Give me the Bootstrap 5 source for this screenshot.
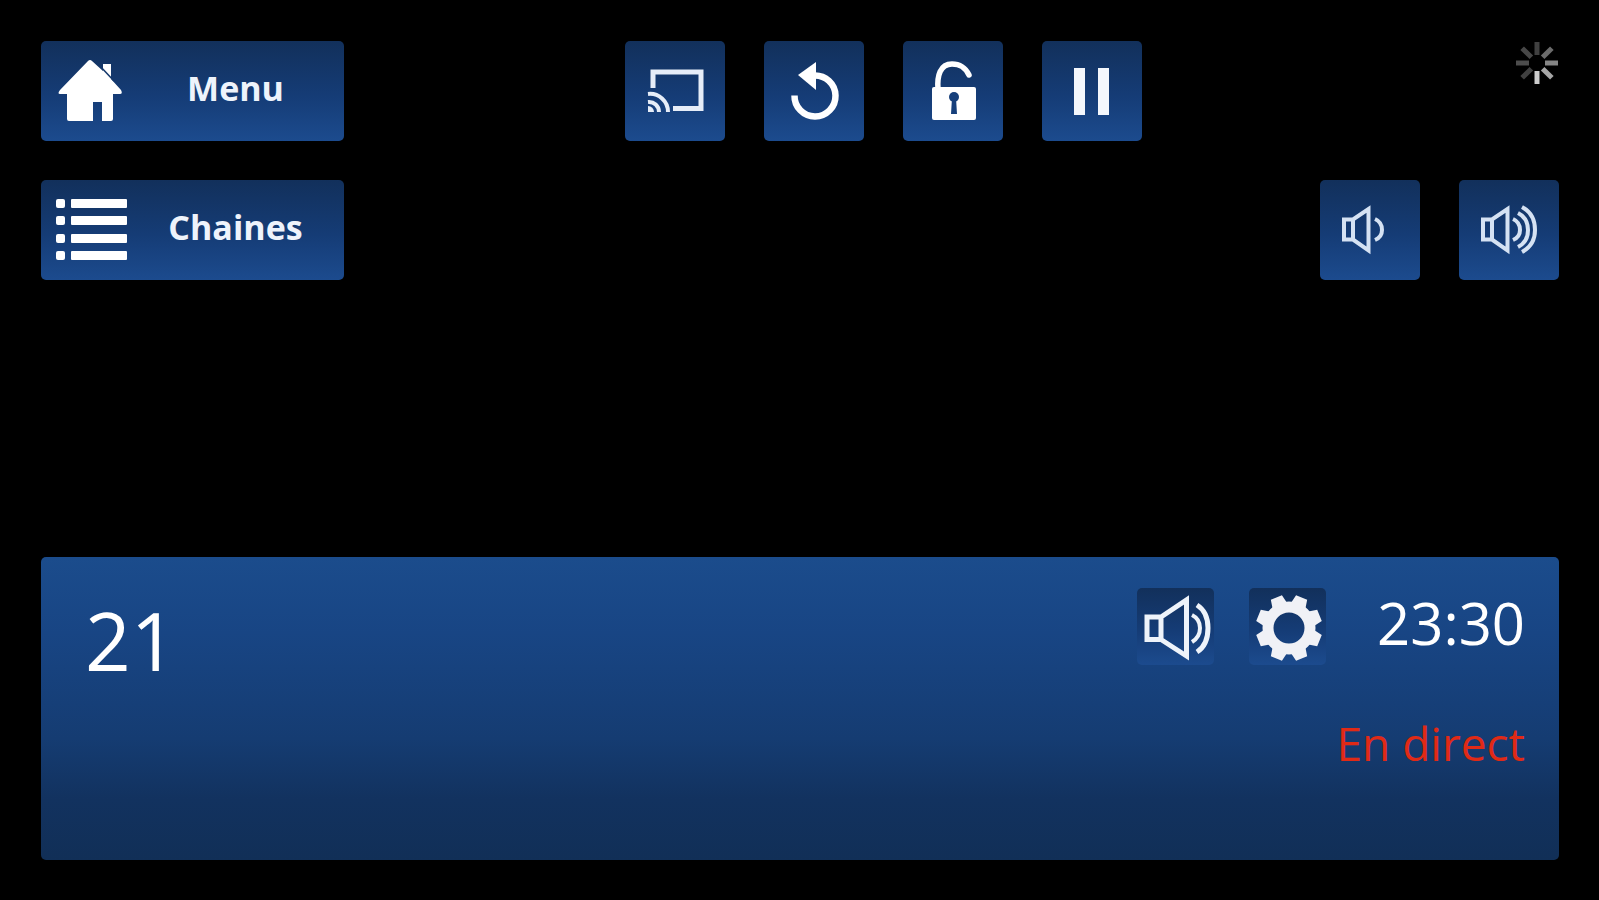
<!DOCTYPE html>
<html lang="fr">
<head>
<meta charset="utf-8">
<meta name="viewport" content="width=device-width, initial-scale=1">
<title>TV</title>
<link href="https://cdn.jsdelivr.net/npm/bootstrap@5.3.0/dist/css/bootstrap.min.css" rel="stylesheet">
<style>
body { background: #000; color: #fff; font-family: "Open Sans", "Noto Sans", sans-serif; }
.screen { padding: 41px 40px 40px 41px; }
.stack { gap: 39px; }
.slots { gap: 39px; }
.slot { width: 100px; height: 100px; }
.tile { padding: 0; border: 0; border-radius: 5px; color: #fff; background: linear-gradient(#12305b, #153c76 55%, #1c4b8e); }
.tile:hover { color: #fff; filter: brightness(1.15); }
.tile svg { display: block; flex: none; }
.wide { width: 303px; height: 100px; }
.wide .caption { padding: 0 14px 6px 0; font-size: 34px; font-weight: 700; line-height: 40px; color: #eef3fb; }
.info { min-height: 303px; padding: 31px 34px 31px 44px; border-radius: 5px; background: linear-gradient(#1b4c8c, #184584 25%, #153c72 60%, #12325f 80%, #112f57); }
.channel { padding-top: 11px; font-size: 80px; font-weight: 500; line-height: 82px; }
.status { gap: 35px; }
.clock { min-width: 164px; font-size: 58px; font-weight: 500; line-height: 70px; }
.live { margin-top: 54px; font-size: 46px; font-weight: 500; line-height: 48px; color: #e02a16; }
</style>
</head>
<body>
<div class="screen d-flex flex-column justify-content-between min-vh-100">
  <header class="stack d-flex flex-column">
    <div class="d-flex justify-content-between">
      <button type="button" class="btn tile wide d-flex align-items-center">
        <svg width="100" height="100" viewBox="0 0 100 100" fill="currentColor" aria-hidden="true">
          <g transform="translate(-1 -1)">
            <path d="M50 20Q51 20 52 21L63 31V24H71V39L81 50Q83 54 80 54H73V79Q73 81 71 81H62V62H53V81H29Q27 81 27 79V54H20Q17 54 20 50L48 21Q49 20 50 20Z"/>
            <path d="M60 26L74 41" stroke="#14386b" stroke-width="1.5" fill="none"/>
          </g>
        </svg>
        <span class="caption flex-grow-1 text-center">Menu</span>
      </button>
      <div class="slots d-flex">
        <button type="button" class="btn tile slot" aria-label="Diffuser">
          <svg width="100" height="100" viewBox="0 0 100 100" fill="none" stroke="#e6edf8" aria-hidden="true">
            <path d="M28 47V31H76V67.500H48" stroke-width="5"/>
            <path d="M23 53A18 18 0 0 1 43 71M23 61A10 10 0 0 1 34 71" stroke-width="4"/>
            <path d="M23 65A6 6 0 0 1 29 71H23Z" fill="#e6edf8" stroke="none"/>
          </svg>
        </button>
        <button type="button" class="btn tile slot" aria-label="Recommencer">
          <svg width="100" height="100" viewBox="0 0 100 100" fill="none" aria-hidden="true">
            <path d="M30.500 54.500A20.500 20.500 0 1 0 50 34.500" stroke="#fff" stroke-width="6.500"/>
            <path d="M34 34L52 21V49Z" fill="#fff"/>
          </svg>
        </button>
        <button type="button" class="btn tile slot" aria-label="Déverrouiller">
          <svg width="100" height="100" viewBox="0 0 100 100" fill="none" aria-hidden="true">
            <g transform="translate(1 -1)">
              <path d="M34 49C33 36 36 24 48 24C56 24 61 27 65 35" stroke="#fff" stroke-width="5.500" stroke-linecap="round"/>
              <rect x="28" y="47" width="44" height="33" rx="2" fill="#fff"/>
              <circle cx="50" cy="57" r="5" fill="#163f7b"/>
              <path d="M48 58H52L53 74H47Z" fill="#163f7b"/>
            </g>
          </svg>
        </button>
        <button type="button" class="btn tile slot" aria-label="Pause">
          <svg width="100" height="100" viewBox="0 0 100 100" fill="#f4f7fc" aria-hidden="true">
            <path d="M32 27H43V74H32ZM56 27H67V74H56Z"/>
          </svg>
        </button>
        <div class="slot"></div>
        <div class="slot"></div>
        <div class="slot d-flex justify-content-end align-items-start" role="status" aria-label="Chargement">
          <svg width="44" height="44" viewBox="-22 -22 44 44" stroke="#fff" stroke-width="5" aria-hidden="true">
            <path d="M0 8V21" opacity=".8"/>
            <path d="M0 8V21" opacity=".65" transform="rotate(-45)"/>
            <path d="M0 8V21" opacity=".52" transform="rotate(-90)"/>
            <path d="M0 8V21" opacity=".42" transform="rotate(-135)"/>
            <path d="M0 8V21" opacity=".25" transform="rotate(180)"/>
            <path d="M0 8V21" opacity=".28" transform="rotate(135)"/>
            <path d="M0 8V21" opacity=".3" transform="rotate(90)"/>
            <path d="M0 8V21" opacity=".25" transform="rotate(45)"/>
          </svg>
        </div>
      </div>
    </div>
    <div class="d-flex justify-content-between">
      <button type="button" class="btn tile wide d-flex align-items-center">
        <svg width="100" height="100" viewBox="0 0 100 100" fill="currentColor" aria-hidden="true">
          <g transform="translate(-1 -1)">
            <rect x="16" y="20" width="9" height="9" rx="2"/><rect x="31" y="20" width="56" height="9" rx="1"/>
            <rect x="16" y="37" width="9" height="9" rx="2"/><rect x="31" y="37" width="56" height="9" rx="1"/>
            <rect x="16" y="55" width="9" height="9" rx="2"/><rect x="31" y="55" width="56" height="9" rx="1"/>
            <rect x="16" y="72" width="9" height="9" rx="2"/><rect x="31" y="72" width="56" height="9" rx="1"/>
          </g>
        </svg>
        <span class="caption flex-grow-1 text-center">Chaines</span>
      </button>
      <div class="slots d-flex">
        <button type="button" class="btn tile slot" aria-label="Baisser le volume">
          <svg width="100" height="100" viewBox="0 0 100 100" fill="none" stroke="#d5e2f3" stroke-width="4" aria-hidden="true">
            <path d="M24 39.500H33L48.500 29V70.500L33 59.500H24ZM33 39V60"/>
            <path d="M55 39Q62 42 62 50Q62 57 55 60"/>
          </svg>
        </button>
        <button type="button" class="btn tile slot" aria-label="Augmenter le volume">
          <svg width="100" height="100" viewBox="0 0 100 100" fill="none" stroke="#d5e2f3" stroke-width="4" aria-hidden="true">
            <path d="M24 39.500H33L48.500 29V70.500L33 59.500H24ZM33 39V60"/>
            <path d="M54 39Q61 42 61 50Q61 57 54 60M59 33Q69 38 69 50Q69 62 59 67M63 27Q76 34 76 50Q76 65 63 72"/>
          </svg>
        </button>
      </div>
    </div>
  </header>

  <section class="info d-flex justify-content-between align-items-start">
    <div class="channel">21</div>
    <div class="text-end">
      <div class="status d-flex align-items-start">
        <button type="button" class="btn tile" aria-label="Son">
          <svg width="77" height="77" viewBox="0 0 77 77" fill="none" stroke="#eef3fa" stroke-width="5" aria-hidden="true">
            <path d="M10 29H24V51.500H10ZM24 29L49.500 12V68L24 51.500"/>
            <path d="M55 27Q63 31 63 40Q63 49 55 54" stroke-width="4"/>
            <path d="M60 17Q71 24 71 40Q71 57 60 64"/>
          </svg>
        </button>
        <button type="button" class="btn tile" aria-label="Réglages">
          <svg width="77" height="77" viewBox="-40 -40 77 77" aria-hidden="true">
            <circle r="21" fill="none" stroke="#f0f1f6" stroke-width="11"/>
            <g fill="#f0f1f6">
              <path id="cog" d="M-8 -23L-6 -33H6L8 -23ZM-8 23L-6 33H6L8 23Z" transform="rotate(22.500)"/>
              <use href="#cog" transform="rotate(45)"/>
              <use href="#cog" transform="rotate(90)"/>
              <use href="#cog" transform="rotate(135)"/>
            </g>
          </svg>
        </button>
        <time class="clock" datetime="23:30">23:30</time>
      </div>
      <div class="live">En direct</div>
    </div>
  </section>
</div>
<script src="https://cdn.jsdelivr.net/npm/bootstrap@5.3.0/dist/js/bootstrap.bundle.min.js"></script>
</body>
</html>
